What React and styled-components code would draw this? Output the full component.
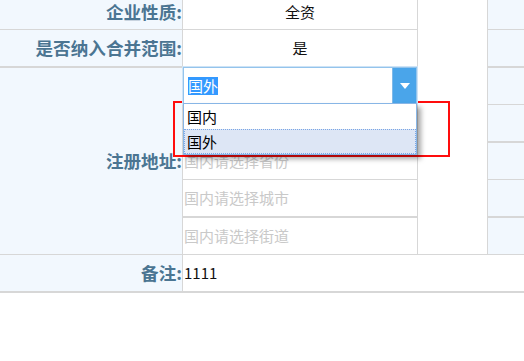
import React from "react";
import styled, { createGlobalStyle } from "styled-components";

const GlobalStyle = createGlobalStyle`
  body {
    margin: 0;
    background: #fff;
    font-family: "Noto Sans CJK SC", "Noto Sans", sans-serif;
  }
`;

const line = "#d7d7d7";
const tint = "#f2f8fe";

const Page = styled.div`
  position: relative;
  width: 524px;
  height: 361px;
  overflow: hidden;
`;

// first row is scrolled partly out of view, so it is shorter
const Sheet = styled.div`
  display: grid;
  grid-template-columns: 183px 235px 70px 1fr;
  grid-template-rows: 30px 38px 37px 38px 37px 38px 37px 38px;
`;

const Label = styled.div`
  grid-column: 1;
  grid-row: ${(p) => (p.$rows ? `span ${p.$rows}` : "auto")};
  display: flex;
  align-items: center;
  justify-content: flex-end;
  padding-bottom: ${(p) => (p.$cut ? 6 : 0)}px;
  background: ${tint};
  border-right: 1px solid ${line};
  border-bottom: ${(p) => (p.$thick ? 2 : 1)}px solid ${line};
  color: #4b7592;
  font-size: 17.6px;
  font-weight: 700;
  line-height: 20px;
`;

const Value = styled.div`
  grid-column: ${(p) => (p.$wide ? "2 / -1" : "2")};
  position: relative;
  display: flex;
  align-items: center;
  justify-content: ${(p) => (p.$center ? "center" : "flex-start")};
  padding-left: ${(p) => (p.$center ? 0 : 1)}px;
  padding-bottom: ${(p) => (p.$cut ? 6 : 0)}px;
  border-right: ${(p) => (p.$wide ? 0 : 1)}px solid ${line};
  border-bottom: ${(p) => (p.$thick ? 2 : 1)}px solid ${line};
  color: ${(p) => (p.$hint ? "#c9c9c9" : "#111")};
  font-size: 15px;
  line-height: 18px;
  z-index: ${(p) => (p.$open ? 2 : "auto")};
`;

const Blank = styled.div`
  grid-column: 3;
  grid-row: 1 / span 7;
  background: #fff;
  border-right: 1px solid ${line};
  border-bottom: 1px solid ${line};
`;

const Side = styled.div`
  grid-column: 4;
  background: ${tint};
  border-bottom: ${(p) => (p.$thick ? 2 : 1)}px solid ${line};
`;

const Select = styled.div`
  position: relative;
  align-self: flex-start;
  display: flex;
  width: 235px;
  height: 37px;
  margin: -1px 0 0 -1px;
  box-sizing: border-box;
  border: 1px solid #94c4ec;
  box-shadow: 0 0 0 1px #cde3f6;
  background: #fff;
`;

const Current = styled.div`
  flex: 1;
  display: flex;
  align-items: center;
  padding-left: 4px;
  span {
    background: #3399ff;
    color: #fff;
    font-size: 15px;
    line-height: 18px;
  }
`;

const Arrow = styled.div`
  width: 23px;
  display: flex;
  align-items: center;
  justify-content: center;
  background: #4aa5ea;
  border-left: 1px solid #7fb9e8;
`;

const Menu = styled.ul`
  position: absolute;
  top: 100%;
  left: -1px;
  right: -1px;
  margin: 0;
  padding: 0;
  list-style: none;
  background: #fff;
  border: 1px solid #88b6e6;
  box-shadow: 4px 4px 5px rgba(0, 0, 0, 0.35);
`;

const Option = styled.li`
  height: 25px;
  box-sizing: border-box;
  display: flex;
  align-items: center;
  padding-left: 2px;
  font-size: 15px;
  color: #000;
  background: ${(p) => (p.$active ? "#dde6f5" : "#fff")};
  border: 1px ${(p) => (p.$active ? "dotted #7aa6e6" : "solid transparent")};
`;

const Mark = styled.div`
  position: absolute;
  left: 173px;
  top: 101px;
  width: 277px;
  height: 56px;
  box-sizing: border-box;
  border: 2px solid #ff0d0d;
  pointer-events: none;
`;

export default function App() {
  return (
    <>
      <GlobalStyle />
      <Page>
        <Sheet>
          <Label $cut>企业性质:</Label>
          <Value $center $cut>全资</Value>
          <Blank />
          <Side />

          <Label $thick>是否纳入合并范围:</Label>
          <Value $center $thick>是</Value>
          <Side $thick />

          <Label $rows={5}>注册地址:</Label>
          <Value $open>
            <Select>
              <Current>
                <span>国外</span>
              </Current>
              <Arrow>
                <svg width="10" height="6" viewBox="0 0 10 6">
                  <path d="M0 0h10L5 6z" fill="#fff" />
                </svg>
              </Arrow>
              <Menu>
                <Option>国内</Option>
                <Option $active>国外</Option>
              </Menu>
            </Select>
          </Value>
          <Side />

          <Value $thick />
          <Side $thick />

          <Value $hint>国内请选择省份</Value>
          <Side />

          <Value $hint $thick>国内请选择城市</Value>
          <Side $thick />

          <Value $hint>国内请选择街道</Value>
          <Side />

          <Label $thick>备注:</Label>
          <Value $wide $thick>1111</Value>
        </Sheet>
        <Mark />
      </Page>
    </>
  );
}
